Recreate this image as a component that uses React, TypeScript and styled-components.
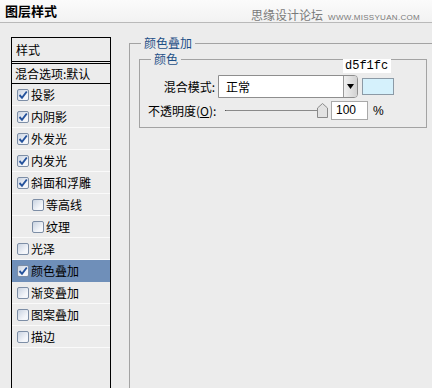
import React from 'react';
import styled, { createGlobalStyle } from 'styled-components';

const GlobalStyle = createGlobalStyle`
    html, body {
        margin: 0;
        padding: 0;
        background: #ececec;
        overflow: hidden;
    }
    body {
        font-family: 'Noto Sans CJK SC', 'Noto Sans', sans-serif;
        font-size: 12px;
        color: #000;
    }
`;

const Window = styled.div`
    width: 432px;
    height: 388px;
    display: flex;
    flex-direction: column;
    overflow: hidden;
    background: #ececec;
`;

const TitleBar = styled.div`
    height: 22px;
    flex-shrink: 0;
    display: flex;
    align-items: center;
    justify-content: space-between;
    padding: 0 12px 0 5px;
    background: linear-gradient(#fbfbfb, #f2f2f2);
    border-bottom: 1px solid #b9b9b9;
`;

const Title = styled.span`
    font-size: 13px;
    font-weight: 700;
    line-height: 22px;
`;

const Watermark = styled.span`
    display: flex;
    align-items: baseline;
    gap: 5px;
    color: #7a7a7a;
    font-size: 12px;
    padding-top: 7px;
`;

const WatermarkUrl = styled.span`
    font-family: 'Liberation Sans', sans-serif;
    font-size: 8px;
    letter-spacing: 0.3px;
`;

const Body = styled.div`
    flex: 1;
    display: flex;
    align-items: stretch;
    padding: 14px 0 0 11px;
    min-height: 0;
`;

const StyleList = styled.div`
    width: 98px;
    flex-shrink: 0;
    border: 1px solid #000;
    border-bottom: none;
    display: flex;
    flex-direction: column;
`;

const ListHeader = styled.div`
    height: 23px;
    line-height: 23px;
    padding-left: 4px;
    border-bottom: 3px double #000;
`;

const BlendRow = styled.div`
    height: 19px;
    line-height: 19px;
    padding-left: 3px;
    border-bottom: 1px solid #000;
    white-space: nowrap;
`;

const ListItem = styled.div<{ $indent?: boolean; $selected?: boolean }>`
    height: 21px;
    display: flex;
    align-items: center;
    gap: 2px;
    padding-left: ${props => (props.$indent ? 20 : 5)}px;
    border-bottom: 1px solid ${props => (props.$selected ? '#6f8fb9' : '#fafafa')};
    background: ${props => (props.$selected ? '#6f8fb9' : 'transparent')};
    white-space: nowrap;
`;

const Box = styled.span`
    width: 10px;
    height: 10px;
    flex-shrink: 0;
    border: 1px solid #7d8ea6;
    border-radius: 2px;
    background: linear-gradient(135deg, #c9d3e1, #f4f6fa 70%);
    display: flex;
    align-items: center;
    justify-content: center;
`;

const Options = styled.div`
    flex: 1;
    margin-left: 18px;
    margin-top: -1px;
    min-width: 0;
`;

const OuterGroup = styled.fieldset`
    margin: 0 -20px 0 0;
    padding: 0 0 0 9px;
    height: 400px;
    border: 1px solid #a3a3a3;
    border-right: none;
    border-bottom: none;
`;

const GroupLegend = styled.legend<{ $offset: number }>`
    color: #1d4f86;
    line-height: 14px;
    padding: 0 3px;
    margin-left: ${props => props.$offset}px;
`;

const InnerGroup = styled.fieldset`
    position: relative;
    width: 288px;
    margin: 2px 0 0 0;
    padding: 9px 0 5px 8px;
    border: 1px solid #a3a3a3;
    box-sizing: border-box;
    display: flex;
    flex-direction: column;
    gap: 1px;
`;

const HexLabel = styled.span`
    position: absolute;
    left: 203px;
    top: -7px;
    width: 48px;
    height: 14px;
    background: #fff;
    font-family: 'Liberation Mono', monospace;
    font-size: 12px;
    line-height: 14px;
    padding-left: 2px;
    box-sizing: border-box;
`;

const Row = styled.div`
    display: flex;
    align-items: center;
    height: 23px;
`;

const Label = styled.span<{ $width?: number; $align?: string }>`
    width: ${props => (props.$width ? `${props.$width}px` : 'auto')};
    text-align: ${props => props.$align || 'right'};
    margin-right: 3px;
    white-space: nowrap;
`;

const Select = styled.div`
    width: 140px;
    height: 23px;
    box-sizing: border-box;
    border: 1px solid #8e8e8e;
    border-radius: 0 4px 4px 0;
    background: #fff;
    display: flex;
    align-items: center;
    justify-content: space-between;
    padding-left: 7px;
    overflow: hidden;
`;

const DropButton = styled.span`
    width: 13px;
    height: 100%;
    border-left: 1px solid #9a9a9a;
    background: linear-gradient(90deg, #f0f0f0, #d2d2d2);
    display: flex;
    align-items: center;
    justify-content: center;
`;

const Swatch = styled.span`
    width: 32px;
    height: 17px;
    margin-left: 4px;
    box-sizing: border-box;
    border: 1px solid #8c9aa6;
    background: #d5f1fc;
`;

const Slider = styled.div`
    width: 103px;
    height: 16px;
    display: flex;
    align-items: center;
`;

const Track = styled.span`
    flex: 1;
    height: 1px;
    background: #8a8a8a;
    border-left: 1px solid #555;
`;

const NumberBox = styled.span`
    width: 37px;
    height: 19px;
    box-sizing: border-box;
    margin-left: 3px;
    border: 1px solid #a9a9a9;
    background: #fff;
    font-family: 'Liberation Sans', sans-serif;
    font-size: 12px;
    line-height: 17px;
    padding-left: 4px;
`;

const Percent = styled.span`
    margin-left: 5px;
    font-family: 'Liberation Sans', sans-serif;
`;

function Check({ checked }: { checked?: boolean }) {
    return (
        <Box>
            {checked && (
                <svg width="10" height="10" viewBox="0 0 10 10">
                    <path d="M1.5 5 L4 7.8 L8.8 1.5" stroke="#24529c" strokeWidth="1.9" fill="none" />
                </svg>
            )}
        </Box>
    );
}

const effects = [
    { name: '投影', checked: true },
    { name: '内阴影', checked: true },
    { name: '外发光', checked: true },
    { name: '内发光', checked: true },
    { name: '斜面和浮雕', checked: true },
    { name: '等高线', indent: true },
    { name: '纹理', indent: true },
    { name: '光泽' },
    { name: '颜色叠加', checked: true, selected: true },
    { name: '渐变叠加' },
    { name: '图案叠加' },
    { name: '描边' },
];

export default function App() {
    return (
        <Window>
            <GlobalStyle />
            <TitleBar>
                <Title>图层样式</Title>
                <Watermark>
                    思缘设计论坛
                    <WatermarkUrl>WWW.MISSYUAN.COM</WatermarkUrl>
                </Watermark>
            </TitleBar>
            <Body>
                <StyleList>
                    <ListHeader>样式</ListHeader>
                    <BlendRow>混合选项:默认</BlendRow>
                    {effects.map(e => (
                        <ListItem key={e.name} $indent={e.indent} $selected={e.selected}>
                            <Check checked={e.checked} />
                            {e.name}
                        </ListItem>
                    ))}
                </StyleList>
                <Options>
                    <OuterGroup>
                        <GroupLegend $offset={2}>颜色叠加</GroupLegend>
                        <InnerGroup>
                            <GroupLegend $offset={3}>颜色</GroupLegend>
                            <HexLabel>d5f1fc</HexLabel>
                            <Row>
                                <Label $width={67}>混合模式:</Label>
                                <Select>
                                    正常
                                    <DropButton>
                                        <svg width="7" height="5" viewBox="0 0 7 5">
                                            <path d="M0 0 H7 L3.5 5 Z" fill="#000" />
                                        </svg>
                                    </DropButton>
                                </Select>
                                <Swatch />
                            </Row>
                            <Row>
                                <Label $width={74} $align="left">
                                    不透明度(<u>O</u>):
                                </Label>
                                <Slider>
                                    <Track />
                                    <svg width="11" height="15" viewBox="0 0 11 15">
                                        <path
                                            d="M0.5 14.5 V5 L5.5 0.5 L10.5 5 V14.5 Z"
                                            fill="#e2e2e2"
                                            stroke="#8a8a8a"
                                        />
                                    </svg>
                                </Slider>
                                <NumberBox>100</NumberBox>
                                <Percent>%</Percent>
                            </Row>
                        </InnerGroup>
                    </OuterGroup>
                </Options>
            </Body>
        </Window>
    );
}
